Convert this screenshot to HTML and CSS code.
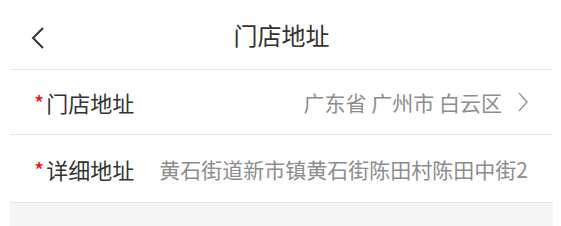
FILE: index.html
```html
<!DOCTYPE html>
<html>
<head>
    <title>门店地址</title>
    <link rel="stylesheet" href="styles.css">
</head>
<body>
    <div class="page">
        <header class="topbar">
            <span class="back">
                <svg width="16" height="24" viewBox="0 0 16 24"><path d="M13 2 L3 12 L13 22" fill="none" stroke="#333" stroke-width="2"/></svg>
            </span>
            <h1>门店地址</h1>
        </header>

        <div class="row">
            <span class="label"><i>*</i>门店地址</span>
            <span class="value">广东省 广州市 白云区</span>
            <span class="arrow">
                <svg width="12" height="20" viewBox="0 0 12 20"><path d="M3 1 L11 10 L3 19" fill="none" stroke="#999" stroke-width="1.5"/></svg>
            </span>
        </div>

        <div class="row row2">
            <span class="label"><i>*</i>详细地址</span>
            <span class="value">黄石街道新市镇黄石街陈田村陈田中街2</span>
        </div>

        <div class="bottom"></div>
    </div>
</body>
</html>
```

FILE: styles.css
```css
body {
    margin: 0;
    background: #fff;
    font-family: "Noto Sans CJK SC", "Noto Sans", sans-serif;
}

.page {
    margin: 0 8px 0 10px;
}

.topbar {
    height: 70px;
    border-bottom: 1px solid #e6e6e6;
    display: flex;
    align-items: center;
    justify-content: center;
    position: relative;
    box-sizing: border-box;
}

.topbar h1 {
    margin: 0;
    font-size: 24px;
    font-weight: normal;
    color: #333;
}

.back {
    position: absolute;
    left: 20px;
    top: 26px;
}

.row {
    height: 65px;
    display: flex;
    align-items: center;
    padding: 0 25px 0 24px;
    border-bottom: 1px solid #e6e6e6;
    box-sizing: border-box;
}

.row2 {
    height: 68px;
}

.label {
    font-size: 22px;
    color: #333;
    white-space: nowrap;
}

.label i {
    font-style: normal;
    color: #f00;
    margin-right: 2px;
}

.value {
    flex: 1;
    text-align: right;
    font-size: 21px;
    color: #8c8c8c;
    white-space: nowrap;
}

.arrow {
    margin-left: 14px;
    display: flex;
}

.bottom {
    height: 30px;
    background: #f5f5f5;
}
```
